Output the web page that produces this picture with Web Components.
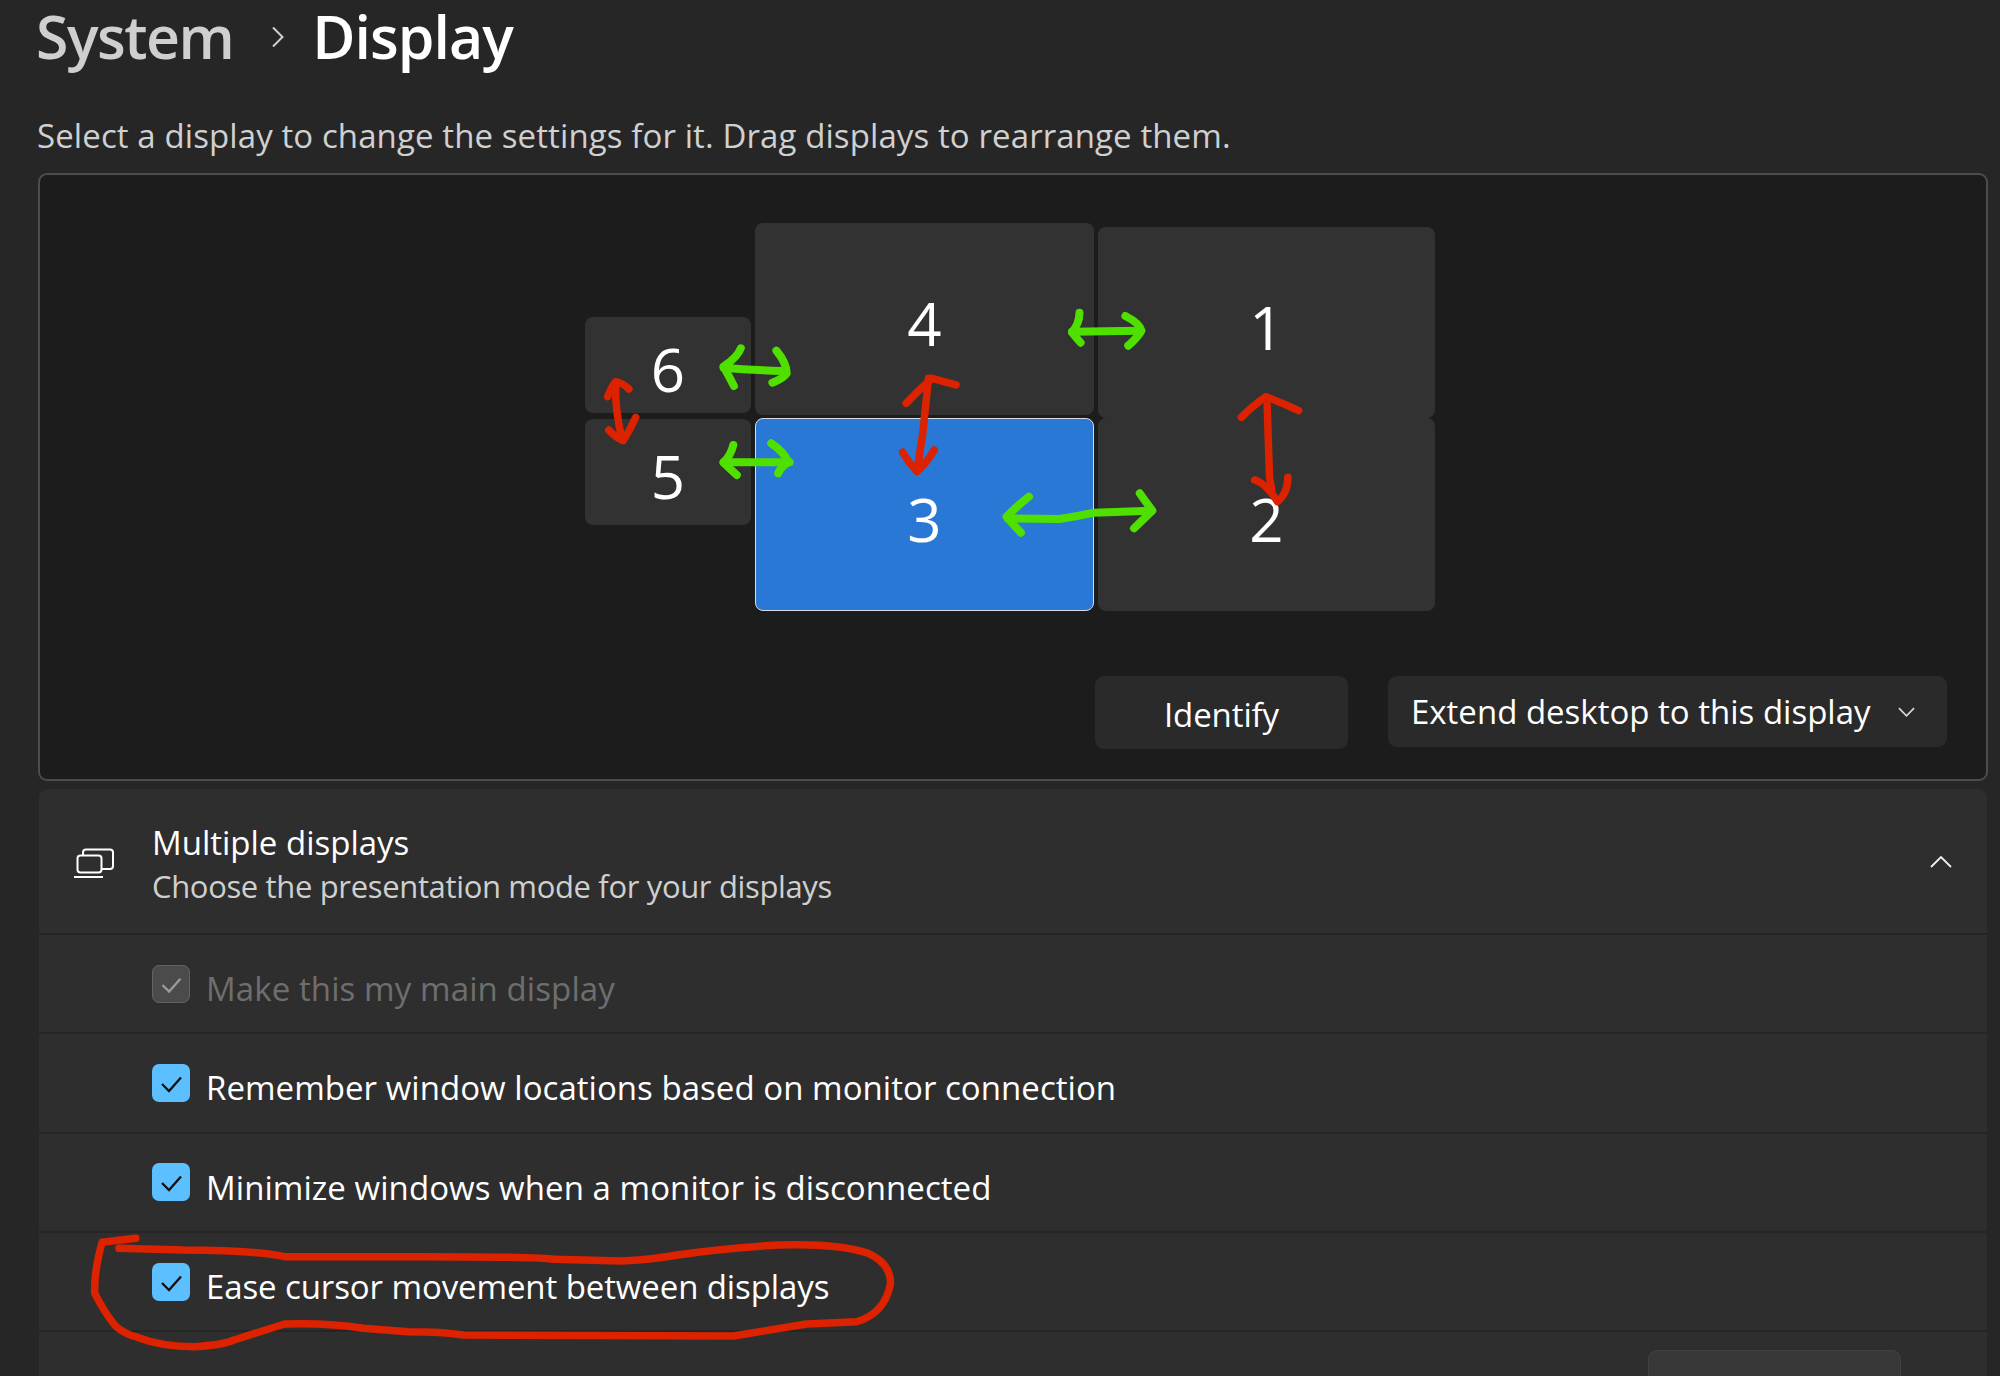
<!DOCTYPE html>
<html lang="en">
<head>
<meta charset="utf-8">
<title>System - Display</title>
<style>
  html, body { margin: 0; height: 100%; background: #262626; overflow: hidden; }
  body { font-family: "Open Sans", "Liberation Sans", sans-serif; color: #fff; }
</style>
</head>
<body>
<settings-page>
  <display-canvas>
    <display-tile num="4" x="715" y="48" w="339" h="192"></display-tile>
    <display-tile num="1" x="1058" y="52" w="337" h="191"></display-tile>
    <display-tile num="6" x="545" y="142" w="166" h="96"></display-tile>
    <display-tile num="5" x="545" y="244" w="166" h="106"></display-tile>
    <display-tile num="3" x="715" y="243" w="339" h="193" selected></display-tile>
    <display-tile num="2" x="1058" y="243" w="337" h="193"></display-tile>
    <flat-button slot="actions">Identify</flat-button>
    <select-button slot="actions">Extend desktop to this display</select-button>
  </display-canvas>
  <settings-card>
    <card-header>
      <span slot="title">Multiple displays</span>
      <span slot="sub">Choose the presentation mode for your displays</span>
    </card-header>
    <check-row disabled style="--ls:.1px">Make this my main display</check-row>
    <check-row style="--ls:.04px">Remember window locations based on monitor connection</check-row>
    <check-row style="--ls:.06px">Minimize windows when a monitor is disconnected</check-row>
    <check-row>Ease cursor movement between displays</check-row>
    <action-row>Detect other display</action-row>
  </settings-card>
</settings-page>
<scribble-layer></scribble-layer>

<script>
class SettingsPage extends HTMLElement {
  constructor() {
    super();
    this.attachShadow({ mode: "open" }).innerHTML = `
      <style>
        :host { display: block; box-sizing: border-box; width: 2000px; height: 1376px; padding-left: 38px; padding-right: 12px; overflow: hidden; }
      </style>
      <page-header></page-header>
      <slot></slot>`;
  }
}

class PageHeader extends HTMLElement {
  constructor() {
    super();
    this.attachShadow({ mode: "open" }).innerHTML = `
      <style>
        :host { display: block; height: 173px; box-sizing: border-box; }
        .crumbs { display: flex; align-items: center; height: 72px; margin-left: -2px; font-size: 59px; line-height: 60px; font-weight: 600; letter-spacing: -1.5px; }
        .parent { color: #cfcfcf; }
        .current { color: #fff; letter-spacing: -1px; }
        svg { width: 14px; height: 22px; margin: 0 27px 0 38px; position: relative; top: 1px; }
        p { margin: 42px 0 0 -1px; font-size: 33px; line-height: 44px; color: #d0d0d0; letter-spacing: .1px; }
      </style>
      <div class="crumbs">
        <span class="parent">System</span>
        <svg viewBox="0 0 14 22"><path d="M2 1.5 L11.5 11 L2 20.5" fill="none" stroke="#cfcfcf" stroke-width="2"/></svg>
        <span class="current">Display</span>
      </div>
      <p>Select a display to change the settings for it. Drag displays to rearrange them.</p>`;
  }
}

class DisplayCanvas extends HTMLElement {
  constructor() {
    super();
    this.attachShadow({ mode: "open" }).innerHTML = `
      <style>
        :host { display: flex; flex-direction: column; justify-content: flex-end; position: relative; box-sizing: border-box; height: 608px; background: #1c1c1c; border: 2px solid #4c4c4c; border-radius: 9px; }
        .actions { display: flex; justify-content: flex-end; align-items: flex-start; gap: 40px; padding: 0 39px 30px 0; }
      </style>
      <slot></slot>
      <div class="actions"><slot name="actions"></slot></div>`;
  }
}

class DisplayTile extends HTMLElement {
  constructor() {
    super();
    this.attachShadow({ mode: "open" }).innerHTML = `
      <style>
        :host { display: flex; position: absolute; box-sizing: border-box; align-items: center; justify-content: center; background: #323232; border-radius: 8px; color: #fff; font-size: 60px; padding-top: 8px; }
        :host([selected]) { background: #2a78d6; border: 1.5px solid #d6dce4; }
      </style>
      <span></span>`;
  }
  connectedCallback() {
    this.shadowRoot.querySelector("span").textContent = this.getAttribute("num");
    // tiles sit on the free canvas, the place is the content
    this.style.left = this.getAttribute("x") + "px";
    this.style.top = this.getAttribute("y") + "px";
    this.style.width = this.getAttribute("w") + "px";
    this.style.height = this.getAttribute("h") + "px";
  }
}

class FlatButton extends HTMLElement {
  constructor() {
    super();
    this.attachShadow({ mode: "open" }).innerHTML = `
      <style>
        :host { display: flex; box-sizing: border-box; align-items: center; justify-content: center; width: 253px; height: 73px; padding-top: 3px; background: #2a2a2a; border-radius: 9px; font-size: 33px; letter-spacing: -0.1px; color: #fff; }
      </style>
      <slot></slot>`;
  }
}

class SelectButton extends HTMLElement {
  constructor() {
    super();
    this.attachShadow({ mode: "open" }).innerHTML = `
      <style>
        :host { display: flex; box-sizing: border-box; align-items: center; width: 559px; height: 71px; padding: 0 0 0 23px; background: #2a2a2a; border-radius: 9px; font-size: 33px; letter-spacing: 0; color: #fff; }
        svg { width: 17px; height: 10px; margin-left: 27px; }
      </style>
      <slot></slot>
      <svg viewBox="0 0 18 10"><path d="M1 1 L9 9 L17 1" fill="none" stroke="#d8d8d8" stroke-width="1.8"/></svg>`;
  }
}

class SettingsCard extends HTMLElement {
  constructor() {
    super();
    this.attachShadow({ mode: "open" }).innerHTML = `
      <style>
        :host { display: block; margin: 8px 1px 0 1px; background: #2e2e2e; border-radius: 9px 9px 0 0; }
      </style>
      <slot></slot>`;
  }
}

class CardHeader extends HTMLElement {
  constructor() {
    super();
    this.attachShadow({ mode: "open" }).innerHTML = `
      <style>
        :host { display: flex; box-sizing: border-box; height: 146px; align-items: center; padding: 7px 35px 0 35px; border-bottom: 2px solid #252525; }
        .icon { width: 40px; height: 32px; margin-right: 38px; position: relative; top: -1px; }
        .text { flex: 1; display: flex; flex-direction: column; }
        .title { font-size: 33px; line-height: 42px; color: #fff; }
        .sub { font-size: 31px; line-height: 44px; letter-spacing: -0.35px; color: #cfcfcf; }
        .chev { width: 22px; height: 12px; position: relative; top: -3px; }
      </style>
      <svg class="icon" viewBox="0 0 40 32" fill="none" stroke="#fff" stroke-width="2">
        <rect x="3.5" y="7.5" width="24" height="17" rx="3"/>
        <path d="M9 7 V4.500 Q9 1.500 12 1.500 H36 Q39 1.500 39 4.500 V18 Q39 21 36 21 H28"/>
        <path d="M0 29 H29"/>
      </svg>
      <div class="text">
        <div class="title"><slot name="title"></slot></div>
        <div class="sub"><slot name="sub"></slot></div>
      </div>
      <svg class="chev" viewBox="0 0 22 12"><path d="M1 11 L11 1 L21 11" fill="none" stroke="#eee" stroke-width="1.8"/></svg>`;
  }
}

class CheckRow extends HTMLElement {
  constructor() {
    super();
    this.attachShadow({ mode: "open" }).innerHTML = `
      <style>
        :host { display: flex; box-sizing: border-box; height: 99.300px; align-items: center; padding-left: 113px; border-bottom: 2px solid #252525; font-size: 33px; letter-spacing: var(--ls, -0.1px); color: #fff; }
        .box { width: 38px; height: 38px; box-sizing: border-box; border-radius: 7px; background: #5cbfff; margin-right: 16px; flex: none; }
        .box svg { display: block; width: 100%; height: 100%; }
        .box path { fill: none; stroke: #111; stroke-width: 2.300; }
        .label { padding-top: 10px; }
        :host([disabled]) { color: #6e6e6e; }
        :host([disabled]) .box { background: #4b4b4b; border: 1.5px solid #626262; }
        :host([disabled]) .box path { stroke: #9c9c9c; }
      </style>
      <div class="box"><svg viewBox="0 0 38 38"><path d="M10 20 L17 27 L29 13.500"/></svg></div>
      <div class="label"><slot></slot></div>`;
  }
}

class ActionRow extends HTMLElement {
  constructor() {
    super();
    this.attachShadow({ mode: "open" }).innerHTML = `
      <style>
        :host { display: flex; box-sizing: border-box; height: 99px; align-items: center; padding: 0 86px 0 113px; font-size: 33px; letter-spacing: -0.1px; color: #fff; }
        .label { flex: 1; padding-top: 18px; }
        .btn { box-sizing: border-box; width: 253px; height: 64px; background: #383838; border: 1.5px solid #414141; border-radius: 9px; }
      </style>
      <div class="label"><slot></slot></div>
      <div class="btn"></div>`;
  }
}

// hand drawn marks on top of the screenshot, the path coords are in zoomed crop units
class ScribbleLayer extends HTMLElement {
  constructor() {
    super();
    this.attachShadow({ mode: "open" }).innerHTML = `
      <style>
        :host { display: block; position: absolute; left: 0; top: 0; width: 2000px; height: 1376px; pointer-events: none; }
        svg { display: block; width: 100%; height: 100%; }
        path { fill: none; stroke-linecap: round; stroke-linejoin: round; vector-effect: non-scaling-stroke; }
        .green path { stroke: #4fe000; stroke-width: 8; }
        .red path { stroke: #dd2200; stroke-width: 7.500; }
        .ring path { stroke: #dd2200; stroke-width: 7.500; }
      </style>
      <svg viewBox="0 0 2000 1376">
        <g class="green" transform="translate(560 200) scale(.574 .3333)">
          <path d="M315 445 Q310 470 285 500 Q295 530 303 558"/>
          <path d="M285 503 Q330 510 390 513"/>
          <path d="M377 452 Q395 490 395 520 Q390 535 370 548"/>
          <path d="M905 338 Q905 370 892 397 Q900 415 907 428"/>
          <path d="M892 395 L1010 392"/>
          <path d="M985 348 Q1010 370 1013 392 Q1005 415 990 437"/>
          <path d="M302 735 Q298 765 285 788 Q295 805 308 825"/>
          <path d="M285 787 L400 787"/>
          <path d="M368 730 Q390 755 398 787 Q385 800 380 820"/>
          <path d="M817 890 Q795 920 778 950 Q790 975 803 998"/>
          <path d="M780 955 L870 957 Q900 950 930 938 L1030 932"/>
          <path d="M1010 880 Q1020 905 1032 932 Q1015 960 1000 985"/>
        </g>
        <g class="red" transform="translate(560 200) scale(.574 .3333)">
          <path d="M120 567 Q110 550 97 545 Q90 560 83 590"/>
          <path d="M97 550 Q95 620 108 720"/>
          <path d="M132 652 Q122 690 110 722 Q95 710 85 690"/>
          <path d="M603 610 Q625 570 648 535 L690 555"/>
          <path d="M642 535 L632 700 L622 810"/>
          <path d="M597 757 Q608 790 622 815 Q640 785 652 750"/>
          <path d="M1187 652 Q1205 620 1230 590 Q1260 610 1287 632"/>
          <path d="M1232 615 L1236 830 L1240 870"/>
          <path d="M1210 840 Q1230 850 1250 905 Q1268 880 1268 832"/>
        </g>
        <g class="ring" transform="translate(60 1200) scale(.5612 .3333)">
          <path d="M135 115 L75 127 Q60 220 62 280 Q80 340 100 380 Q120 405 135 410 Q180 440 240 440 Q290 435 310 420 L400 372 Q480 368 540 385 L620 395 Q680 395 720 405 L1200 408 Q1300 380 1330 372 L1420 365 Q1470 340 1480 250 Q1480 190 1440 160 Q1390 130 1280 135 Q1180 145 1100 165 Q1050 180 1000 183 L880 178 Q860 170 640 170 L400 170 Q340 150 220 150 L105 145"/>
        </g>
      </svg>`;
  }
}

customElements.define("settings-page", SettingsPage);
customElements.define("page-header", PageHeader);
customElements.define("display-canvas", DisplayCanvas);
customElements.define("display-tile", DisplayTile);
customElements.define("flat-button", FlatButton);
customElements.define("select-button", SelectButton);
customElements.define("settings-card", SettingsCard);
customElements.define("card-header", CardHeader);
customElements.define("check-row", CheckRow);
customElements.define("action-row", ActionRow);
customElements.define("scribble-layer", ScribbleLayer);
</script>
</body>
</html>
